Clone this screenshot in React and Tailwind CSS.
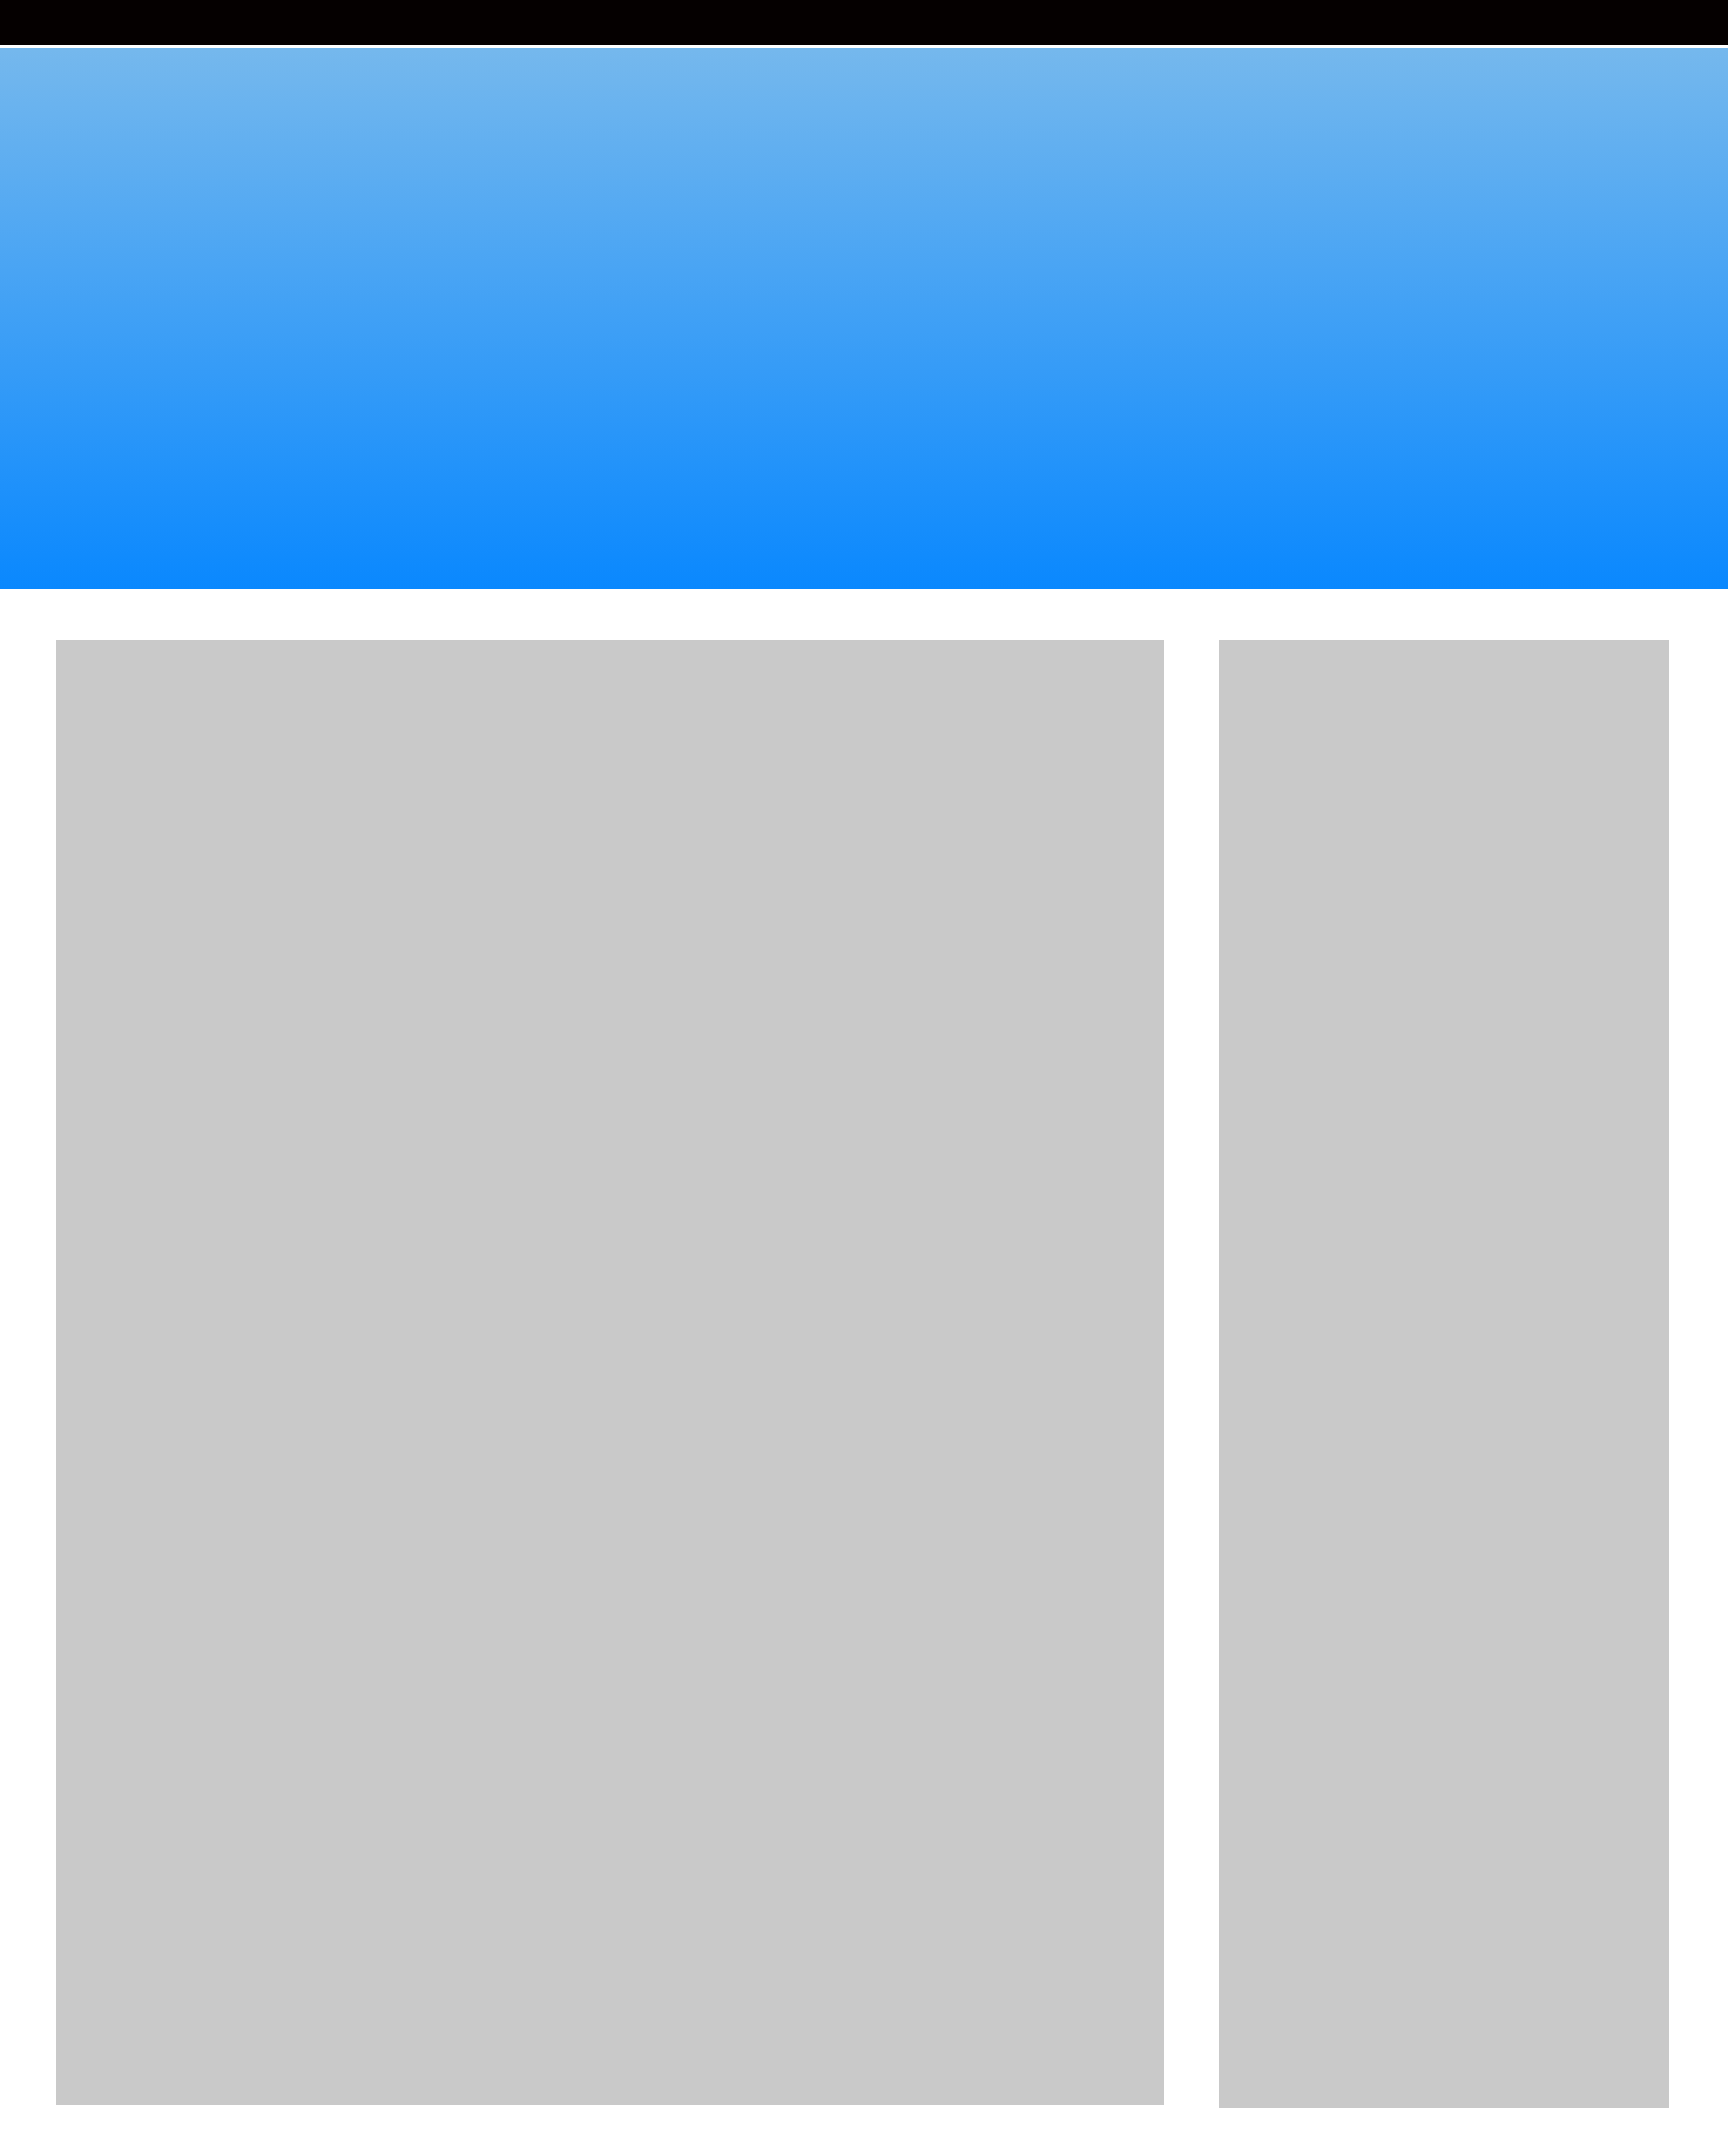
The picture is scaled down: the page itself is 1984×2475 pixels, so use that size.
export default function App() {
  return (
    <div className="w-[1984px] min-h-[2475px] bg-white">
      <div className="h-[52px] bg-[#050000]" />
      <div className="mt-[3px] h-[621px] bg-linear-to-b/srgb from-[#75b8ed] to-[#0a88fe]" />
      <div className="flex items-start gap-[64px] pl-[64px] pr-[68px] pt-[59px] pb-[55px]">
        <div className="w-[1272px] h-[1681px] bg-[#c9c9c9]" />
        <div className="w-[516px] h-[1685px] bg-[#c9c9c9]" />
      </div>
    </div>
  );
}
